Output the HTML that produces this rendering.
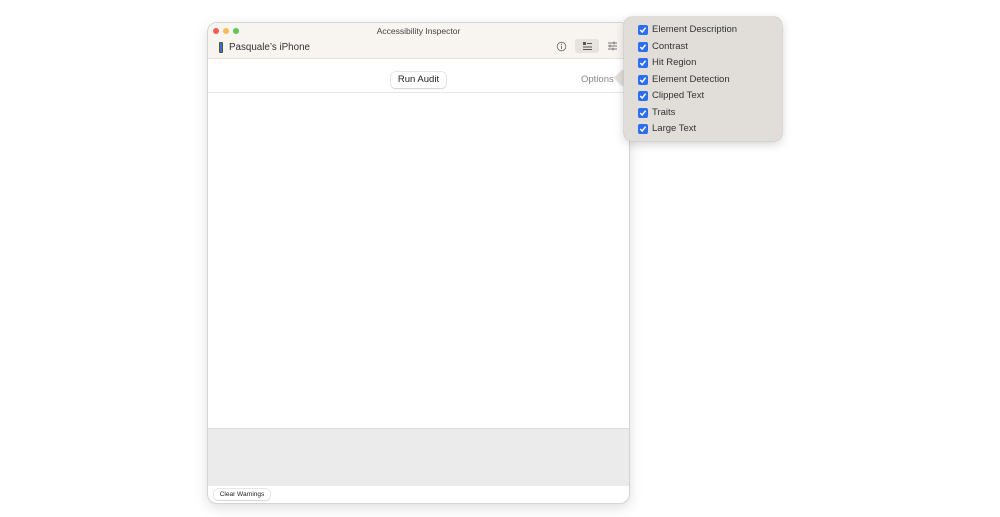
<!DOCTYPE html>
<html><head><meta charset="utf-8"><style>
*{margin:0;padding:0;box-sizing:border-box}
body{width:1000px;height:517px;background:#fff;position:relative;font-family:"Liberation Sans",sans-serif;overflow:hidden}
.win{position:absolute;left:208px;top:23px;width:421px;height:480px;border-radius:9px;background:#fff;box-shadow:0 0 0 1px #d4d4d4,0 4px 14px rgba(0,0,0,.15);overflow:hidden}
.tb{position:absolute;left:0;top:0;width:421px;height:36px;background:#f8f5f1;border-bottom:1px solid #e6e3df}
.dot{position:absolute;top:5px;width:6px;height:6px;border-radius:50%}
.title{position:absolute;top:3px;left:0;width:421px;text-align:center;font-size:8.5px;color:#444}
.dev{position:absolute;left:21px;top:19px;font-size:9.8px;color:#333}
.phone{position:absolute;left:11px;top:19px;width:4px;height:11px;border-radius:1px;background:#3b6fd8;border:1px solid #553}
.btn{position:absolute;background:#fff;border-radius:4px;box-shadow:0 0 0 .5px #ccc,0 1px 1px rgba(0,0,0,.15);color:#222;text-align:center}
.gray{position:absolute;left:0;top:405px;width:421px;height:58px;background:#ebebeb;border-top:1px solid #ddd}
.pop{position:absolute;left:624px;top:17px;width:158px;height:124px;background:#e1deda;border-radius:8px;box-shadow:0 0 0 .5px #c8c5c1,0 3px 10px rgba(0,0,0,.18)}
.arrow{position:absolute;left:617px;top:72px;width:12px;height:12px;background:#e1deda;transform:rotate(45deg);box-shadow:-1px 1px 1px rgba(0,0,0,.08)}
.row{position:absolute;left:14px;height:12px;font-size:9.5px;color:#333;line-height:12px}
.cb{position:absolute;left:0;top:1px;width:10px;height:10px;border-radius:2px;background:#2c6ef2}
.cb svg{position:absolute;left:0;top:0}
.row span{position:absolute;left:14px;top:0;white-space:nowrap}
</style></head><body>
<div class="win">
 <div class="tb">
  <div class="dot" style="left:5px;background:#ec5f57"></div>
  <div class="dot" style="left:15px;background:#f4bd4f"></div>
  <div class="dot" style="left:25px;background:#5ec654"></div>
  <div class="title">Accessibility Inspector</div>
  <div class="phone"></div>
  <div class="dev">Pasquale’s iPhone</div>
  <svg style="position:absolute;left:348px;top:18px" width="11" height="11"><circle cx="5.5" cy="5.5" r="4.3" fill="none" stroke="#666" stroke-width=".8"/><line x1="5.5" y1="4.6" x2="5.5" y2="8" stroke="#666" stroke-width=".9"/><circle cx="5.5" cy="3.2" r=".6" fill="#666"/></svg>
  <div style="position:absolute;left:367px;top:16px;width:24px;height:14px;background:#e6e3df;border-radius:3px"></div>
  <svg style="position:absolute;left:374px;top:18px" width="11" height="10"><rect x="1" y="1" width="3" height="3" fill="#555"/><line x1="5" y1="2.5" x2="10" y2="2.5" stroke="#555"/><line x1="1" y1="6" x2="10" y2="6" stroke="#555"/><line x1="1" y1="8.5" x2="10" y2="8.5" stroke="#555"/></svg>
  <svg style="position:absolute;left:399px;top:18px" width="11" height="10"><line x1="1" y1="2" x2="10" y2="2" stroke="#777"/><line x1="1" y1="5" x2="10" y2="5" stroke="#777"/><line x1="1" y1="8" x2="10" y2="8" stroke="#777"/><line x1="7" y1="0.5" x2="7" y2="3.5" stroke="#777"/><line x1="3" y1="3.5" x2="3" y2="6.5" stroke="#777"/><line x1="6" y1="6.5" x2="6" y2="9.5" stroke="#777"/></svg>
 </div>
 <div class="btn" style="left:183px;top:49px;width:55px;height:16px;font-size:9.5px;line-height:16px">Run Audit</div>
 <div style="position:absolute;left:373px;top:51px;font-size:9.5px;color:#888">Options</div>
 <div style="position:absolute;left:0;top:69px;width:421px;height:1px;background:#e6e6e6"></div>
 <div class="gray"></div>
 <div class="btn" style="left:6px;top:466px;width:56px;height:11px;font-size:6.5px;line-height:11px">Clear Warnings</div>
</div>
<div class="arrow"></div>
<div class="pop">
 <div class="row" style="top:7px"><div class="cb"><svg width="10" height="10"><path d="M2.2 5L4.2 7L7.6 2.7" fill="none" stroke="#fff" stroke-width="1.5"/></svg></div><span>Element Description</span></div>
 <div class="row" style="top:23.5px"><div class="cb"><svg width="10" height="10"><path d="M2.2 5L4.2 7L7.6 2.7" fill="none" stroke="#fff" stroke-width="1.5"/></svg></div><span>Contrast</span></div>
 <div class="row" style="top:40px"><div class="cb"><svg width="10" height="10"><path d="M2.2 5L4.2 7L7.6 2.7" fill="none" stroke="#fff" stroke-width="1.5"/></svg></div><span>Hit Region</span></div>
 <div class="row" style="top:56.5px"><div class="cb"><svg width="10" height="10"><path d="M2.2 5L4.2 7L7.6 2.7" fill="none" stroke="#fff" stroke-width="1.5"/></svg></div><span>Element Detection</span></div>
 <div class="row" style="top:73px"><div class="cb"><svg width="10" height="10"><path d="M2.2 5L4.2 7L7.6 2.7" fill="none" stroke="#fff" stroke-width="1.5"/></svg></div><span>Clipped Text</span></div>
 <div class="row" style="top:89.5px"><div class="cb"><svg width="10" height="10"><path d="M2.2 5L4.2 7L7.6 2.7" fill="none" stroke="#fff" stroke-width="1.5"/></svg></div><span>Traits</span></div>
 <div class="row" style="top:106px"><div class="cb"><svg width="10" height="10"><path d="M2.2 5L4.2 7L7.6 2.7" fill="none" stroke="#fff" stroke-width="1.5"/></svg></div><span>Large Text</span></div>
</div>
</body></html>
